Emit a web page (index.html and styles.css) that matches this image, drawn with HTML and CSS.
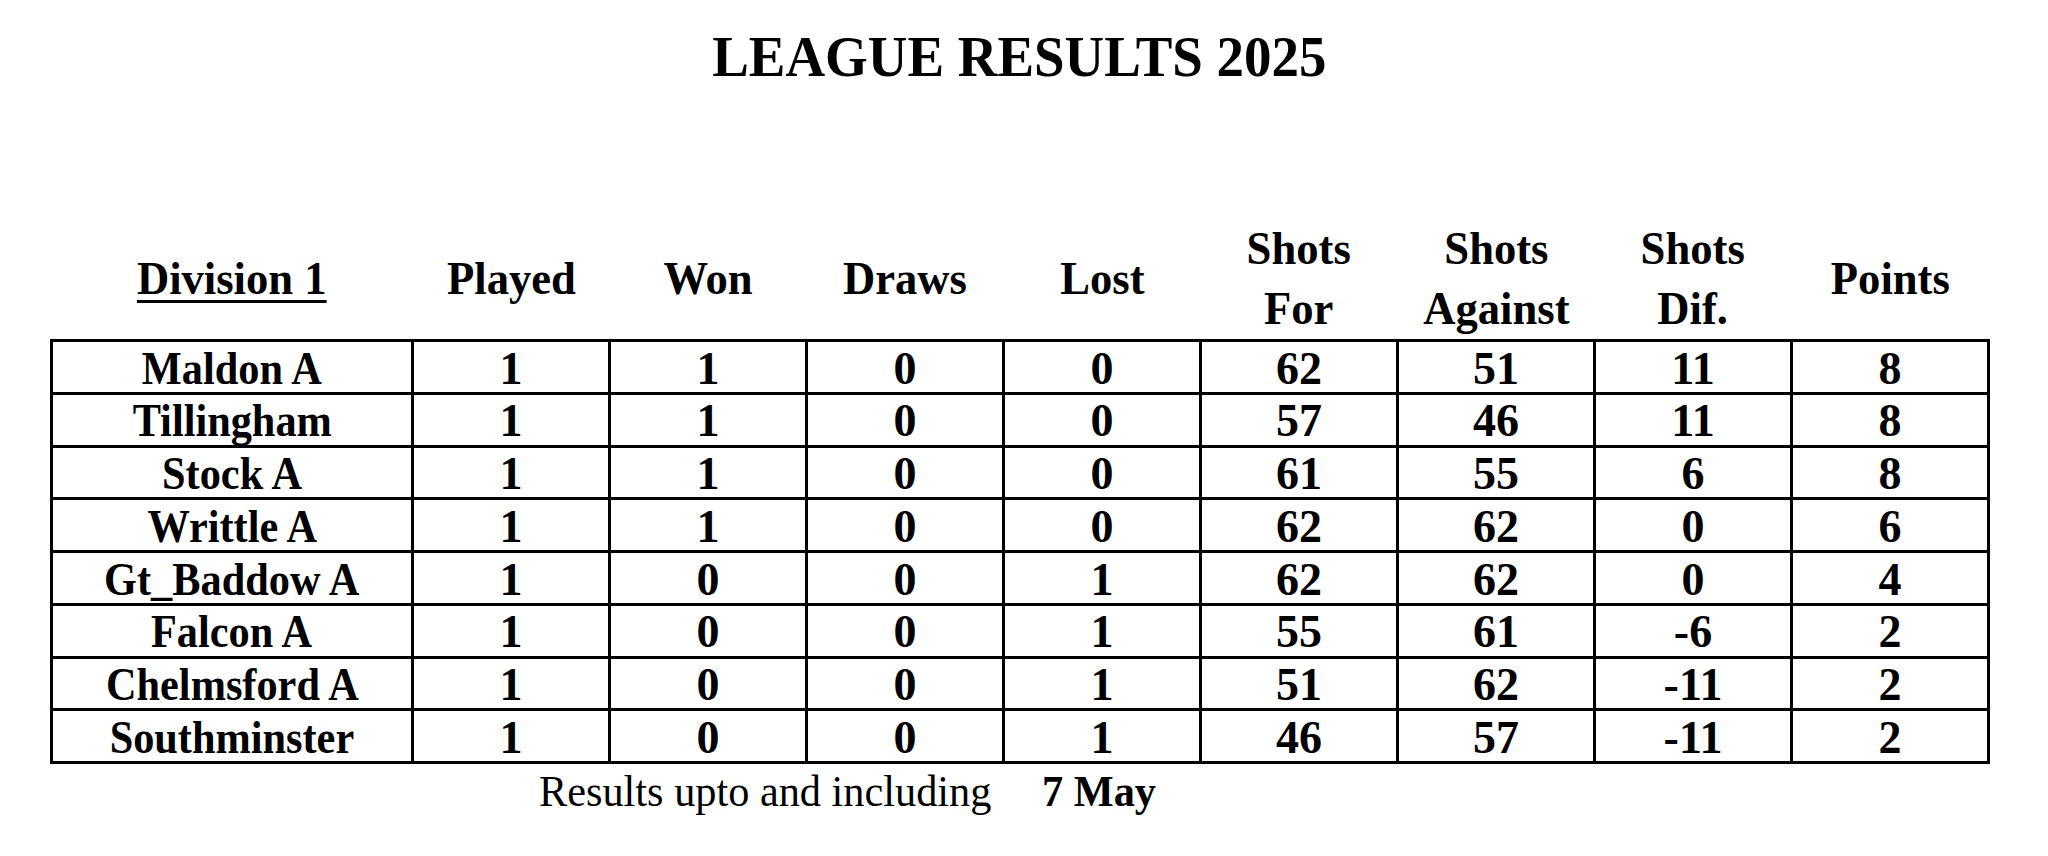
FILE: index.html
```html
<!DOCTYPE html>
<html lang="en">
<head>
<meta charset="utf-8">
<title>League Results 2025</title>
<link rel="stylesheet" href="styles.css">
</head>
<body>
<div class="page">
  <h1 class="title"><span class="sq">LEAGUE RESULTS 2025</span></h1>
  <table class="league">
    <colgroup>
      <col class="c-team">
      <col class="c-num"><col class="c-num"><col class="c-num"><col class="c-num">
      <col class="c-num"><col class="c-num"><col class="c-num"><col class="c-num">
    </colgroup>
    <thead>
      <tr>
        <th><span class="sq u">Division 1</span></th>
        <th><span class="sq">Played</span></th>
        <th><span class="sq">Won</span></th>
        <th><span class="sq">Draws</span></th>
        <th><span class="sq">Lost</span></th>
        <th><span class="sq">Shots<br>For</span></th>
        <th><span class="sq">Shots<br>Against</span></th>
        <th><span class="sq">Shots<br>Dif.</span></th>
        <th><span class="sq">Points</span></th>
      </tr>
    </thead>
    <tbody>
      <tr><td><span class="sq">Maldon A</span></td><td>1</td><td>1</td><td>0</td><td>0</td><td>62</td><td>51</td><td>11</td><td>8</td></tr>
      <tr><td><span class="sq">Tillingham</span></td><td>1</td><td>1</td><td>0</td><td>0</td><td>57</td><td>46</td><td>11</td><td>8</td></tr>
      <tr><td><span class="sq">Stock A</span></td><td>1</td><td>1</td><td>0</td><td>0</td><td>61</td><td>55</td><td>6</td><td>8</td></tr>
      <tr><td><span class="sq">Writtle A</span></td><td>1</td><td>1</td><td>0</td><td>0</td><td>62</td><td>62</td><td>0</td><td>6</td></tr>
      <tr><td><span class="sq">Gt_Baddow A</span></td><td>1</td><td>0</td><td>0</td><td>1</td><td>62</td><td>62</td><td>0</td><td>4</td></tr>
      <tr><td><span class="sq">Falcon A</span></td><td>1</td><td>0</td><td>0</td><td>1</td><td>55</td><td>61</td><td>-6</td><td>2</td></tr>
      <tr><td><span class="sq">Chelmsford A</span></td><td>1</td><td>0</td><td>0</td><td>1</td><td>51</td><td>62</td><td>-11</td><td>2</td></tr>
      <tr><td><span class="sq">Southminster</span></td><td>1</td><td>0</td><td>0</td><td>1</td><td>46</td><td>57</td><td>-11</td><td>2</td></tr>
    </tbody>
  </table>
  <p class="note"><span class="sq-l">Results upto and including</span><span class="sq-l date">7 May</span></p>
</div>
</body>
</html>
```

FILE: styles.css
```css
html, body {
  margin: 0;
  padding: 0;
  background: #ffffff;
}

body {
  font-family: "Liberation Serif", "Times New Roman", serif;
  color: #000000;
}

.page {
  width: 2048px;
  height: 856px;
  overflow: hidden;
}

.sq {
  display: inline-block;
  transform: scaleX(0.92);
  transform-origin: 50% 50%;
}

.sq-l {
  display: inline-block;
  transform: scaleX(0.94);
  transform-origin: 0 50%;
}

.title {
  margin: 0;
  padding: 29px 10px 0 0;
  font-size: 56px;
  line-height: 56px;
  font-weight: bold;
  text-align: center;
}

.title .sq {
  transform: scaleX(0.98);
}

.league {
  margin: 134px 0 0 50px;
  width: 1938px;
  border-collapse: collapse;
  table-layout: fixed;
}

.c-team { width: 361px; }
.c-num { width: 197px; }

.league th {
  padding: 0;
  font-size: 46px;
  line-height: 60px;
  font-weight: bold;
  text-align: center;
  vertical-align: middle;
  height: 120px;
}

.league th .sq {
  transform: scaleX(0.97);
}

.u {
  text-decoration: underline;
  text-decoration-thickness: 3px;
  text-underline-offset: 6px;
}

.league td {
  border: 3px solid #000000;
  padding: 3.5px 0 0 0;
  font-size: 46px;
  line-height: 46.25px;
  font-weight: bold;
  text-align: center;
  vertical-align: top;
}

.note {
  margin: 2px 0 0 539px;
  font-size: 45px;
  line-height: 50px;
  display: flex;
  align-items: baseline;
}

.date {
  font-weight: bold;
  margin-left: 22px;
}
```
